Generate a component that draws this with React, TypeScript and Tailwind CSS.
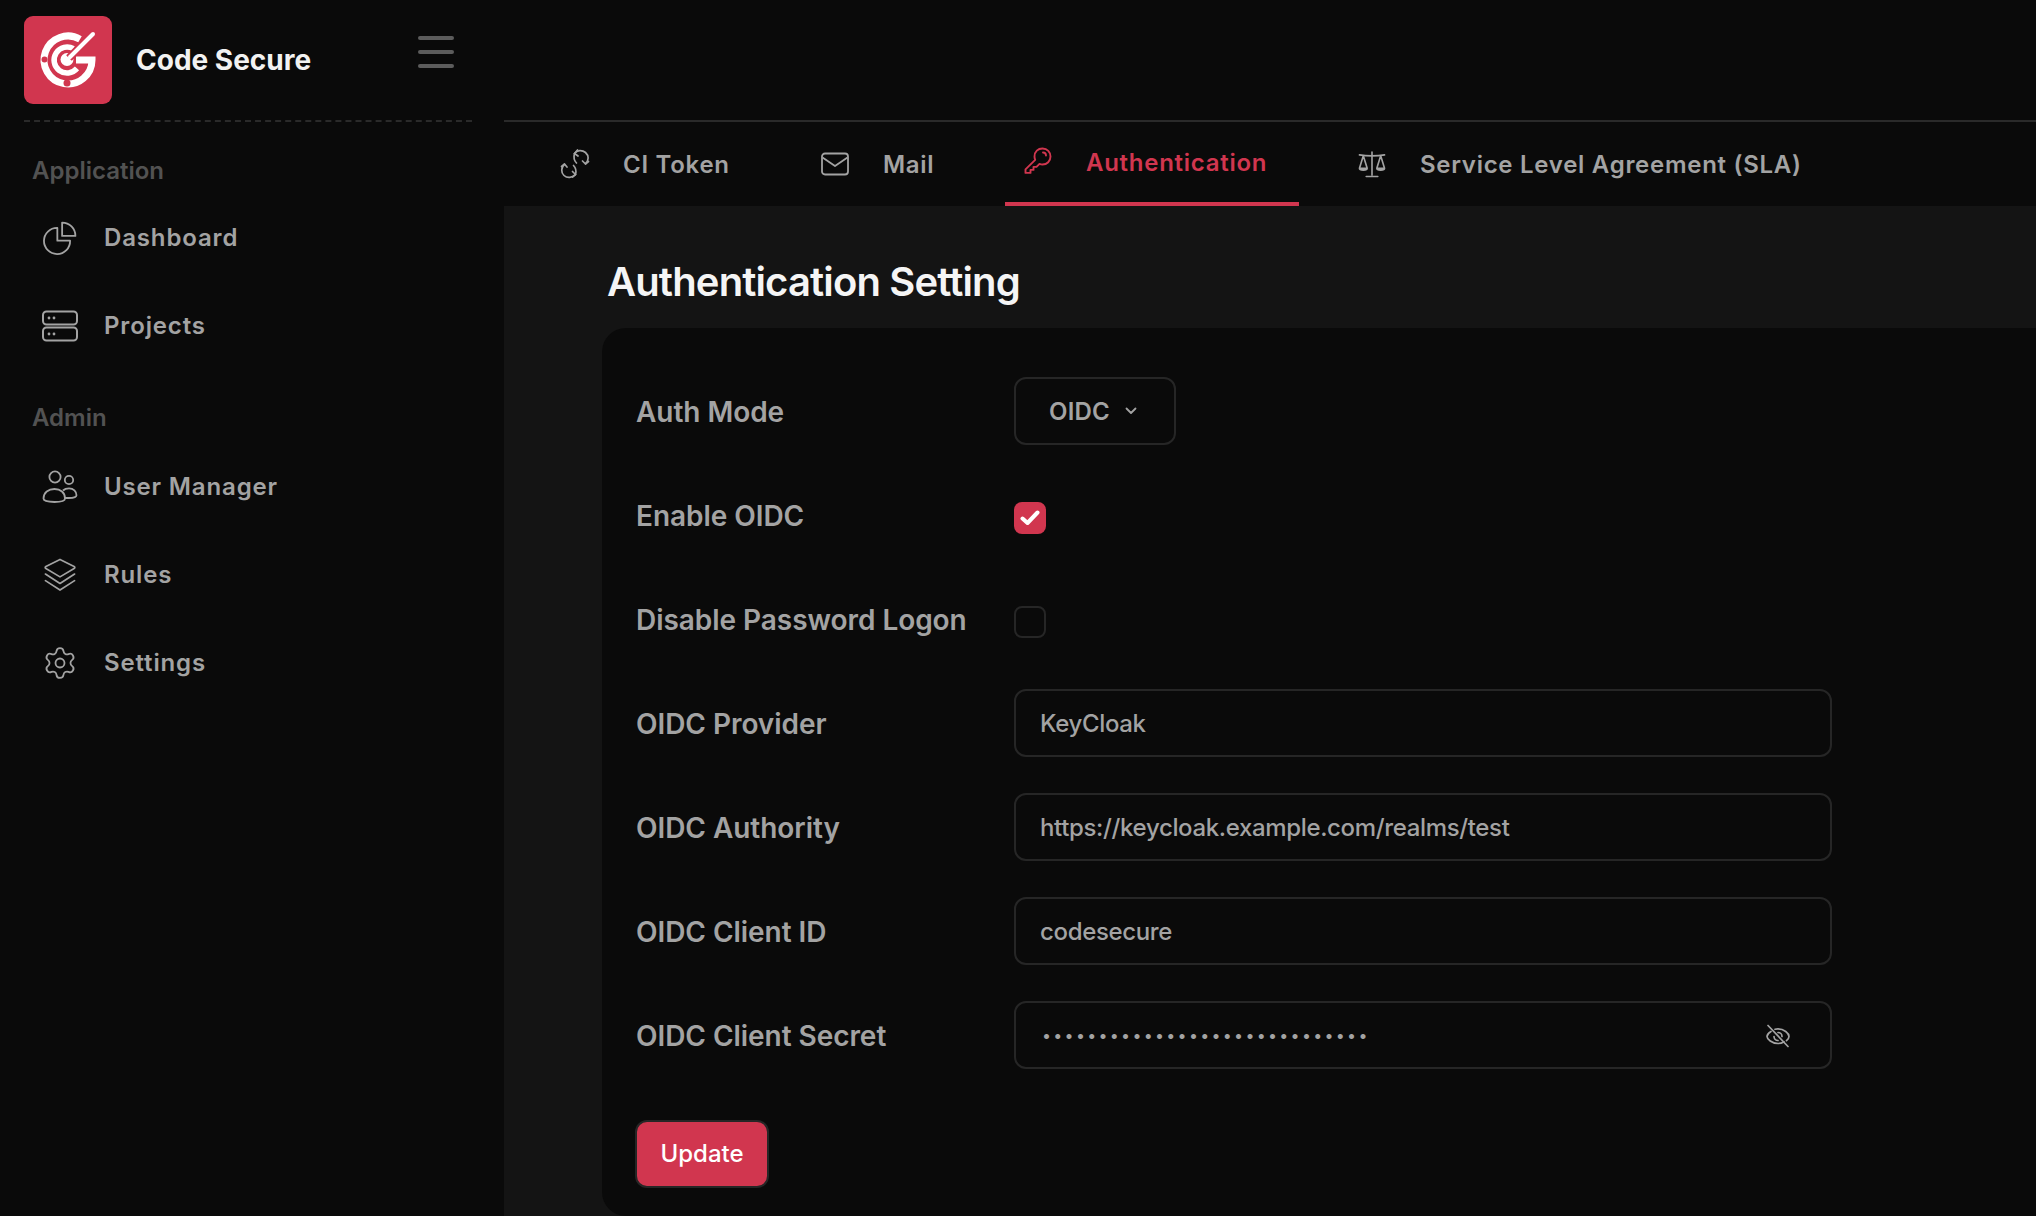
import type { ReactNode } from 'react'
import { Settings } from 'lucide-react'

const ChartIcon = () => (
  <svg viewBox="0 0 32 32" className="w-[34px] h-[34px]" fill="none" stroke="currentColor" strokeWidth="1.7" strokeLinejoin="round" strokeLinecap="round">
    <path d="M13.5 6.5a12.3 12.3 0 1 0 12 12h-12z" />
    <path d="M18 1.5a12.5 12.5 0 0 1 12.5 12.5H18z" />
  </svg>
)

const ServerIcon = () => (
  <svg viewBox="0 0 36 32" className="w-9 h-8" fill="none" stroke="currentColor" strokeWidth="2">
    <rect x="1" y="1.5" width="34" height="13" rx="3.5" />
    <rect x="1" y="17.5" width="34" height="13" rx="3.5" />
    <circle cx="7" cy="8" r="1.4" fill="currentColor" stroke="none" />
    <circle cx="12" cy="8" r="1.4" fill="currentColor" stroke="none" />
    <circle cx="7" cy="24" r="1.4" fill="currentColor" stroke="none" />
    <circle cx="12" cy="24" r="1.4" fill="currentColor" stroke="none" />
  </svg>
)

const UsersIcon = () => (
  <svg viewBox="0 0 36 34" className="w-9 h-[34px]" fill="none" stroke="currentColor" strokeWidth="1.8">
    <circle cx="13" cy="7" r="5.6" />
    <circle cx="27" cy="10" r="4.2" />
    <path d="M1.5 28.5c0-6 5-9.5 11-9.5s10.500 3.500 10.500 9.500c0 2.500-4.500 3.500-10.500 3.500S1.500 31 1.500 28.500z" />
    <path d="M21 20.500c1.500-1.500 3.500-2.200 6-2.200 4.500 0 7.500 3 7.500 7 0 2-3.500 2.700-7.500 2.700h-4" />
  </svg>
)

const LayersIcon = () => (
  <svg viewBox="0 0 34 36" className="w-8 h-9" fill="none" stroke="currentColor" strokeWidth="1.8" strokeLinejoin="round" strokeLinecap="round">
    <path d="M17 1.500 32 9c1 .6 1 1.500 0 2.100L17 20 2 11.100c-1-.6-1-1.500 0-2.100z" />
    <path d="M1.500 17 17 27l15.500-10" />
    <path d="M1.500 24 17 34l15.500-10" />
  </svg>
)

const SyncIcon = () => (
  <svg viewBox="0 0 30 30" className="w-[30px] h-[30px]" fill="none" stroke="currentColor" strokeWidth="1.700" strokeLinecap="round" strokeLinejoin="round">
    <path d="M14.500 4.500C17 1 22 .5 25.500 3.500c3.500 3.200 3.500 8 0 11.100" />
    <path d="M17.500 1l-3 3.500 3.500 2.500M22.500 12l3 3 3-2.500" />
    <path d="M14.500 4.500c-1 3.500-.5 7 2 9.500" />
    <path d="M4.500 15.400C1 18.500.8 23.500 4 26.500c3.300 3 8.300 2.500 11.500-1" />
    <path d="M1.500 17.500l3-2.500 2.500 3M12.500 22.500l3 3-3 2.500" />
    <path d="M15.500 25.500c1-3.500.5-6.500-2-9" />
  </svg>
)

const MailIcon = () => (
  <svg viewBox="0 0 28 24" className="w-7 h-6" fill="none" stroke="currentColor" strokeWidth="1.800" strokeLinejoin="round">
    <rect x="1" y="1.500" width="26" height="21" rx="3" />
    <path d="M1.500 5.500 14 14l12.500-8.500" />
  </svg>
)

const KeyIcon = () => (
  <svg viewBox="0 0 30 30" className="w-[30px] h-[30px]" fill="none" stroke="currentColor" strokeWidth="1.900" strokeLinejoin="round" strokeLinecap="round">
    <path d="M11.500 9.500C11.500 4.500 15 1.500 19.500 1.500c4.800 0 8 3.500 8 8 0 4.700-3.500 8-8 8-1 0-2-.2-3-.6l-3 3h-3v3h-3v3H2.500v-3.500l9.700-9.500c-.500-1.200-.7-2.300-.7-3.400z" />
    <path d="M20 5.500c1.800 0 3 1.200 3 3" />
  </svg>
)

const ScaleIcon = () => (
  <svg viewBox="0 0 30 28" className="w-[30px] h-[27px]" fill="none" stroke="currentColor" strokeWidth="1.700" strokeLinejoin="round" strokeLinecap="round">
    <path d="M15 1v24M9 26.500h12M2 4c4 .700 8 1 13 1s9-.3 13-1" />
    <path d="M6 5 2 18c0 2.500 8 2.500 8 0zM2 18h8M24 5l-4 13c0 2.500 8 2.500 8 0zM20 18h8" />
  </svg>
)

const EyeOffIcon = () => (
  <svg viewBox="0 0 26 26" className="w-[26px] h-[26px]" fill="none" stroke="#a3a3a3" strokeWidth="1.700" strokeLinecap="round">
    <path d="M6 8.500C3.500 10 2 12 2 13.500c0 2.500 5 7 11 7 2.300 0 4.500-.7 6-1.700M10 6.300c1-.3 2-.4 3-.4 6 0 11 4.500 11 7.600 0 1.200-1 2.800-2.500 4.100" />
    <path d="M13 9.500a4 4 0 0 1 4 4M9 13.500a4 4 0 0 0 4 4" />
    <path d="M3 2.500l20 21" />
  </svg>
)

const Logo = () => (
  <svg viewBox="0 0 88 88" className="w-[88px] h-[88px] shrink-0" fill="none">
    <rect width="88" height="88" rx="9" fill="#d1364f" />
    <path d="M56 23.200A24 24 0 1 0 68 44H52" stroke="#fff" strokeWidth="7" />
    <path d="M49.500 32.700A13 13 0 1 0 53 52.400" stroke="#fff" strokeWidth="5.500" />
    <circle cx="43" cy="43.500" r="6.500" fill="#fff" />
    <path d="M45 42 71 16" stroke="#d1364f" strokeWidth="8" />
    <path d="M46 41 69 18" stroke="#fff" strokeWidth="4" strokeLinecap="round" />
    <circle cx="20.500" cy="43.500" r="3" fill="#d1364f" />
    <circle cx="43" cy="67" r="3.500" fill="#d1364f" />
  </svg>
)

const NavItem = ({ icon, label }: { icon: ReactNode; label: string }) => (
  <div className="h-[88px] flex items-center text-[#a3a3a3]">
    <div className="w-[36px] ml-[42px] flex justify-center shrink-0">{icon}</div>
    <span className="ml-[26px] text-[24px] font-semibold tracking-[0.85px]">{label}</span>
  </div>
)

const Sidebar = () => (
  <aside className="w-[504px] shrink-0 bg-[#0a0a0a] flex flex-col">
    <div className="h-[122px] ml-6 mr-8 pt-4 flex items-start border-b-2 border-dashed border-[#2a2a2a]">
      <Logo />
      <span className="ml-6 mt-[25px] text-[28px] leading-[38px] font-bold text-[#f2f2f2]">Code Secure</span>
      <div className="ml-auto mr-[18px] mt-[20px] flex flex-col gap-[10px]">
        <div className="w-9 h-1 rounded-full bg-[#5c5c5c]" />
        <div className="w-9 h-1 rounded-full bg-[#5c5c5c]" />
        <div className="w-9 h-1 rounded-full bg-[#5c5c5c]" />
      </div>
    </div>
    <div className="h-[72px] pl-[32px] pt-[33px] text-[24px] leading-8 font-semibold text-[#525252]">Application</div>
    <div>
      <NavItem icon={<ChartIcon />} label="Dashboard" />
      <NavItem icon={<ServerIcon />} label="Projects" />
    </div>
    <div className="h-[73px] pl-[32px] pt-[32px] text-[24px] leading-8 font-semibold text-[#525252]">Admin</div>
    <div>
      <NavItem icon={<UsersIcon />} label="User Manager" />
      <NavItem icon={<LayersIcon />} label="Rules" />
      <NavItem icon={<Settings size={38} strokeWidth={1.2} />} label="Settings" />
    </div>
  </aside>
)

const tabs = [
  { label: 'CI Token', icon: <SyncIcon />, width: 'w-[220px]' },
  { label: 'Mail', icon: <MailIcon />, width: 'w-[163px]' },
  { label: 'Authentication', icon: <KeyIcon />, width: 'w-[294px]', active: true },
  { label: 'Service Level Agreement (SLA)', icon: <ScaleIcon />, width: 'w-[500px]' },
]

const Tabs = () => (
  <div className="h-[84px] shrink-0 pl-[38px] flex gap-10 bg-[#0a0a0a]">
    {tabs.map((tab) => (
      <div
        key={tab.label}
        className={
          tab.active
            ? `${tab.width} flex items-center pl-[18px] text-[#d1364f] border-b-4 border-[#d1364f]`
            : `${tab.width} flex items-center pl-[18px] pt-[4px] text-[#a3a3a3] border-b-4 border-transparent`
        }
      >
        <div className="w-[30px] flex justify-center">{tab.icon}</div>
        <span className="ml-[33px] mt-[2px] text-[24px] font-semibold tracking-[0.72px] whitespace-nowrap">{tab.label}</span>
      </div>
    ))}
  </div>
)

const Row = ({ label, children }: { label: string; children: ReactNode }) => (
  <div className="flex items-center h-[68px]">
    <label className="w-[378px] shrink-0 pt-[1px] text-[28px] font-semibold text-[#a3a3a3] tracking-[-0.05px]">{label}</label>
    {children}
  </div>
)

const TextField = ({ value }: { value: string }) => (
  <input
    readOnly
    value={value}
    className="w-[818px] h-[68px] px-[24px] bg-transparent border-2 border-[#262626] rounded-xl text-[24px] font-medium text-[#a3a3a3] outline-none tracking-[-0.35px]"
  />
)

export default function App() {
  return (
    <div className="w-[2036px] h-[1216px] overflow-hidden flex bg-[#0a0a0a] font-['Inter',sans-serif]">
      <Sidebar />
      <main className="flex-1 min-w-0 flex flex-col">
        <div className="h-[122px] shrink-0 border-b-2 border-[#2a2a2a] bg-[#0a0a0a]" />
        <Tabs />
        <div className="flex-1 min-h-0 bg-[#141414] pl-[98px] overflow-hidden">
          <h1 className="pl-[5px] pt-[50px] h-[122px] text-[40px] leading-[52px] font-semibold tracking-[-0.86px] text-[#f5f5f5]">
            Authentication Setting
          </h1>
          <div className="w-[1500px] h-[888px] rounded-[24px] bg-[#0a0a0a] pl-[34px] pt-[49px] flex flex-col gap-9">
            <Row label="Auth Mode">
              <div className="w-[162px] h-[68px] flex items-center pl-[33px] gap-[15px] border-2 border-[#262626] rounded-xl text-[24px] font-semibold tracking-[0.2px] text-[#a3a3a3]">
                <span className="pt-[1px]">OIDC</span>
                <svg viewBox="0 0 12 8" className="w-3 h-2" fill="none" stroke="currentColor" strokeWidth="1.800" strokeLinecap="round" strokeLinejoin="round">
                  <path d="M1.500 1.500 6 6l4.500-4.500" />
                </svg>
              </div>
            </Row>
            <Row label="Enable OIDC">
              <div className="w-8 h-8 mt-[6px] rounded-lg bg-[#d1364f] flex items-center justify-center">
                <svg viewBox="0 0 20 16" className="w-5 h-4" fill="none" stroke="#fff" strokeWidth="4" strokeLinecap="round" strokeLinejoin="round">
                  <path d="M2.500 8.500 7.500 13 17.500 2.500" />
                </svg>
              </div>
            </Row>
            <Row label="Disable Password Logon">
              <div className="w-8 h-8 mt-[6px] rounded-lg border-2 border-[#262626]" />
            </Row>
            <Row label="OIDC Provider">
              <TextField value="KeyCloak" />
            </Row>
            <Row label="OIDC Authority">
              <TextField value="https://keycloak.example.com/realms/test" />
            </Row>
            <Row label="OIDC Client ID">
              <TextField value="codesecure" />
            </Row>
            <Row label="OIDC Client Secret">
              <div className="relative">
                <input
                  readOnly
                  type="password"
                  value="aaaaaaaaaaaaaaaaaaaaaaaaaaaaa"
                  className="w-[818px] h-[68px] px-[26px] bg-transparent border-2 border-[#262626] rounded-xl text-[16px] text-[#a3a3a3] outline-none tracking-[2.3px]"
                />
                <div className="absolute right-[41px] top-[22px]">
                  <EyeOffIcon />
                </div>
              </div>
            </Row>
            <button className="w-[134px] h-[68px] mt-[15px] -ml-px bg-[#d1364f] border-2 border-[#262626] rounded-xl text-[24px] font-medium text-white">
              Update
            </button>
          </div>
        </div>
      </main>
    </div>
  )
}
